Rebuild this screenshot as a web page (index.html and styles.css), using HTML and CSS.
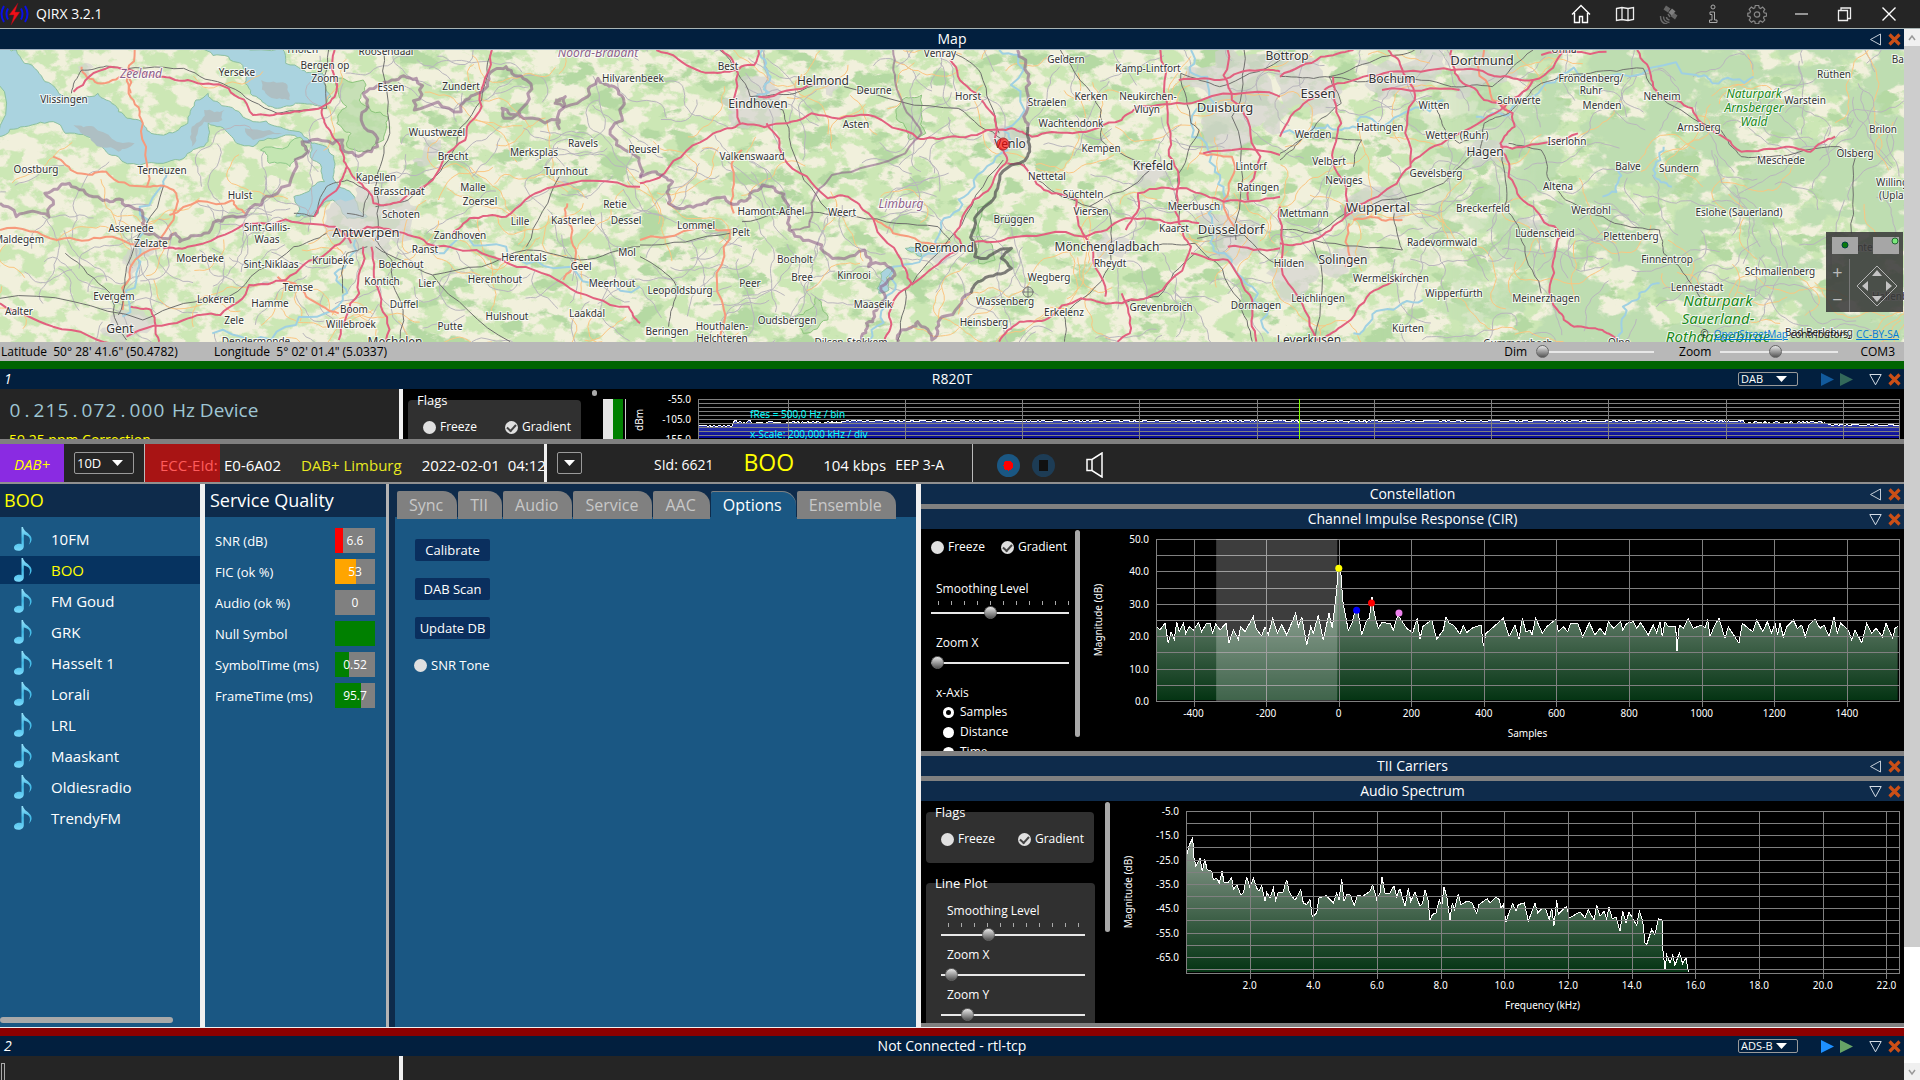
FILE: index.html
```html
<!DOCTYPE html>
<html lang="en">
<head>
<meta charset="utf-8">
<title>QIRX 3.2.1</title>
<link rel="stylesheet" href="styles.css">
</head>
<body>
<svg class="defs" width="0" height="0" aria-hidden="true">
  <defs>
    <linearGradient id="noteFill" x1="0" y1="0" x2="0" y2="1"><stop offset="0" stop-color="#9be4fb"/><stop offset=".5" stop-color="#3fb9e6"/><stop offset="1" stop-color="#7ad9fa"/></linearGradient>
    <linearGradient id="greenFill" x1="0" y1="0" x2="0" y2="1"><stop offset="0" stop-color="#b0b8b0"/><stop offset="1" stop-color="#033312"/></linearGradient>
    <linearGradient id="blueFill" x1="0" y1="0" x2="0" y2="1"><stop offset="0" stop-color="#8f9cd8"/><stop offset=".5" stop-color="#4656b6"/><stop offset="1" stop-color="#000092"/></linearGradient>
    <symbol id="note" viewBox="0 0 18 24"><path d="M7.500 0h1.500c.6 4 5 5.500 7.400 8.800 2.400 3.600.8 6.600-1.600 9 1.500-3 1.800-6-.4-8.200-1.400-1.400-3.200-2-4.600-2.200v11.800c0 2.800-2.400 4.400-5 4.600C1.800 24 0 22.600 0 20.800c0-2.400 2.600-4 5.200-4 .9 0 1.600.1 2.300.4z" fill="url(#noteFill)"/></symbol>
    <symbol id="left" viewBox="0 0 13 13"><path d="M11.500 1v11L1.500 6.500z" fill="none" stroke="#c3ccd6"/></symbol>
    <symbol id="down" viewBox="0 0 13 13"><path d="M.8 1.500h11.400L6.500 11.800z" fill="none" stroke="#d5dde6"/></symbol>
    <symbol id="close" viewBox="0 0 13 13"><path d="M1.500 1.500l10 10M11.500 1.500l-10 10" stroke="#cb4f17" stroke-width="3.200"/></symbol>
    <symbol id="play" viewBox="0 0 13 13"><path d="M0 0l13 6.500L0 13z" fill="currentColor"/></symbol>
  </defs>
</svg>

<div class="window">
  <header class="titlebar">
    <svg class="logo" width="29" height="22" viewBox="0 0 29 22"><g fill="none" stroke="#0a10e8" stroke-width="2"><path d="M4 3q-5 8 0 16M8 5.500q-3 5.500 0 11M25 3q5 8 0 16M21 5.500q3 5.500 0 11"/></g><path d="M18 0L9 12h5l-3 10 9-13h-5z" fill="#f01018" stroke="#801020" stroke-width=".5"/></svg>
    <h1>QIRX 3.2.1</h1>
    <nav class="wintools">
      <button aria-label="Home"><svg width="20" height="20" viewBox="0 0 20 20"><path d="M1 10.500L10 1.500l9 9M3.500 9v9.500h5v-6h3v6h5V9" stroke="#fff" stroke-width="1.400"/></svg></button>
      <button aria-label="Map"><svg width="20" height="20" viewBox="0 0 20 20"><path d="M1.500 4.500l5.500-1 6 1 5.500-1v12l-5.500 1-6-1-5.500 1zM7 3.500v12M13 4.500v12" stroke="#eee" stroke-width="1.300"/></svg></button>
      <button aria-label="Satellite"><svg class="solid" width="20" height="20" viewBox="0 0 20 20"><path d="M7 1.500l4.500 3-2.500 4L4.500 5.500zM14.500 8.500l4 3-2.500 4-4.500-3.500z" fill="#666"/><path d="M9.500 8.500l3.500-4 3.500 3-4 4z" fill="#808080"/><path d="M9 10l2 3M7.500 13q0 2.500 3 3M4.500 12.500q0 5.500 6 6M1.500 12q0 8 7 8" fill="none" stroke="#6a6a6a" stroke-width="1.400"/></svg></button>
      <button aria-label="Info"><svg width="20" height="20" viewBox="0 0 20 20"><circle cx="10" cy="3" r="2" stroke="#aaa"/><path d="M7 8h4.500v8H14v2.500H6.500V16H9v-5.500H7z" stroke="#aaa"/></svg></button>
      <button aria-label="Settings"><svg width="20" height="20" viewBox="0 0 20 20"><path d="M8.300 1.500h3.400l.5 2.400 1.400.6 2-1.400 2.200 2.300-1.300 2 .6 1.400 2.400.5v2.800l-2.400.5-.6 1.400 1.300 2-2.200 2.300-2-1.400-1.400.6-.5 2.400H8.300l-.5-2.400-1.400-.6-2 1.400-2.200-2.300 1.300-2-.6-1.400L.8 12V9.300l2.100-.5.600-1.400-1.300-2 2.200-2.300 2 1.400 1.400-.6z" stroke="#888" stroke-width="1.200"/><circle cx="10" cy="10.500" r="2.700" stroke="#888" stroke-width="1.200"/></svg></button>
      <button aria-label="Minimize"><svg width="20" height="20" viewBox="0 0 20 20"><path d="M4 10h13" stroke="#bbb" stroke-width="1.500"/></svg></button>
      <button aria-label="Restore"><svg width="20" height="20" viewBox="0 0 20 20"><path d="M3.500 6.500h9v10h-9zM6 6V4h9.500v10.500H13" stroke="#eee" stroke-width="1.300"/></svg></button>
      <button aria-label="Close"><svg width="20" height="20" viewBox="0 0 20 20"><path d="M3.500 3.500l13 13M16.500 3.500l-13 13" stroke="#fff" stroke-width="1.400"/></svg></button>
    </nav>
  </header>

  <div class="viewport">
  <main class="content">
    <section class="mapview">
      <div class="bar bar-deep bar-lined"><h2>Map</h2><div class="tools"><button aria-label="Expand"><svg><use href="#left"/></svg></button><button aria-label="Close"><svg><use href="#close"/></svg></button></div></div>
      <div class="map">
        <svg id="map" viewBox="0 0 1904 292" preserveAspectRatio="xMidYMid slice">
          <defs>
            <filter id="woods" x="0" y="0" width="1" height="1" color-interpolation-filters="sRGB"><feTurbulence type="fractalNoise" baseFrequency=".045 .06" numOctaves="5" seed="7"/><feColorMatrix values="0 0 0 0 .8  0 0 0 0 .905  0 0 0 0 .71  9 0 0 0 -4.200"/></filter>
            <filter id="groves" x="0" y="0" width="1" height="1" color-interpolation-filters="sRGB"><feTurbulence type="fractalNoise" baseFrequency=".03 .05" numOctaves="5" seed="21"/><feColorMatrix values="0 0 0 0 .71  0 0 0 0 .85  0 0 0 0 .64  12 0 0 0 -7"/></filter>
            <filter id="forest" x="0" y="0" width="1" height="1" color-interpolation-filters="sRGB"><feTurbulence type="fractalNoise" baseFrequency=".02 .03" numOctaves="5" seed="3"/><feColorMatrix values="0 0 0 0 .745  0 0 0 0 .865  0 0 0 0 .695  14 0 0 0 -6"/></filter>
            <linearGradient id="fadeIn"><stop offset="0" stop-color="#fff" stop-opacity="0"/><stop offset=".3" stop-color="#fff"/></linearGradient>
            <mask id="east"><rect x="1380" y="0" width="524" height="292" fill="url(#fadeIn)"/></mask>
          </defs>
          <rect width="1904" height="292" fill="#f1f0dc"/>
          <rect width="1904" height="292" filter="url(#woods)"/>
          <rect x="400" width="1504" height="292" filter="url(#groves)"/>
          <g mask="url(#east)"><rect x="1380" width="524" height="292" filter="url(#forest)"/></g>
        </svg>
        <div class="navpad">
          <button class="view" aria-label="Centre view"><svg width="26" height="17"><ellipse cx="13" cy="8" rx="3" ry="3" fill="#0a7a0a" stroke="#044" stroke-width="1"/></svg></button>
          <button class="view" aria-label="Corner view"><svg width="26" height="17"><circle cx="22" cy="4" r="3" fill="#7be87b" stroke="#263"/></svg></button>
          <div class="zoomkeys"><button aria-label="Zoom in">+</button><button aria-label="Zoom out">−</button></div>
          <svg class="pan" width="44" height="44" viewBox="0 0 44 44"><path d="M22 2l20 20-20 20L2 22z" fill="none" stroke="#b5b5b5"/><path d="M22 6l5 6H17zM22 38l5-6H17zM7 22l6-5v10zM37 22l-6-5v10z" fill="#c4c4c4"/></svg>
        </div>
        <p class="credit">© &nbsp;<a href="#osm">OpenStreetMap</a> contributors, &nbsp;<a href="#license">CC-BY-SA</a></p>
      </div>
      <div class="statusbar">
        <span class="lat">Latitude&nbsp; 50° 28' 41.6" (50.4782)</span><span>Longitude&nbsp; 5° 02' 01.4" (5.0337)</span>
        <div class="mapsliders">
          <label for="dim">Dim</label><input id="dim" type="range" min="0" max="100" value="0">
          <label for="mzoom">Zoom</label><input id="mzoom" type="range" min="0" max="100" value="46">
          <span>COM3</span>
        </div>
      </div>
    </section>

    <section class="radio">
      <div class="bar bar-deep bar-green"><i>1</i><h2>R820T</h2><div class="tools">
        <label class="pick"><select aria-label="Mode 1"><option>DAB</option></select></label>
        <button class="blue dimmed" aria-label="Start"><svg><use href="#play"/></svg></button><button class="green dimmed" aria-label="Next"><svg><use href="#play"/></svg></button>
        <button class="gap" aria-label="Collapse"><svg><use href="#down"/></svg></button><button aria-label="Close"><svg><use href="#close"/></svg></button></div></div>
      <div class="device">
        <div class="tuner">
          <p class="freq"><span class="digits"><b>0</b><b>.</b><b>2</b><b>1</b><b>5</b><b>.</b><b>0</b><b>7</b><b>2</b><b>.</b><b>0</b><b>0</b><b>0</b></span>Hz Device</p>
          <p class="ppm">59.25 ppm Correction</p>
        </div>
        <div class="rf">
          <fieldset class="group"><legend>Flags</legend><div class="checks"><label><input type="checkbox">Freeze</label><label><input type="checkbox" checked>Gradient</label></div></fieldset>
          <span class="nub"></span>
          <div class="meter"><span></span><span></span></div>
          <svg class="chart" id="rfchart" role="img" aria-label="RF spectrum"></svg>
        </div>
      </div>
    </section>

    <section class="ensemblebar">
      <span class="mode">DAB+</span>
      <label class="pick channel"><select aria-label="Channel"><option>10D</option></select></label>
      <div class="ident"><span class="ecc">ECC-EId:</span><span>E0-6A02</span><span class="name">DAB+ Limburg</span><span>2022-02-01&nbsp; 04:12</span></div>
      <button class="drop" aria-label="More"></button>
      <div class="service"><span>SId: 6621</span><strong>BOO</strong><span>104 kbps</span><span>EEP 3-A</span></div>
      <div class="transport">
        <button class="rec" aria-label="Record"></button><button class="stop" aria-label="Stop"></button>
        <button aria-label="Sound"><svg width="18" height="26" viewBox="0 0 18 26"><path d="M1 7.500h5l10-6.500v24L6 18.500H1zM6 7.500v11" fill="none" stroke="#fff" stroke-width="1.500"/></svg></button>
      </div>
    </section>

    <div class="dab">
      <section class="stations">
        <h3>BOO</h3>
        <ul>
          <li><svg><use href="#note"/></svg>10FM</li><li class="on"><svg><use href="#note"/></svg>BOO</li><li><svg><use href="#note"/></svg>FM Goud</li><li><svg><use href="#note"/></svg>GRK</li><li><svg><use href="#note"/></svg>Hasselt 1</li><li><svg><use href="#note"/></svg>Lorali</li><li><svg><use href="#note"/></svg>LRL</li><li><svg><use href="#note"/></svg>Maaskant</li><li><svg><use href="#note"/></svg>Oldiesradio</li><li><svg><use href="#note"/></svg>TrendyFM</li>
        </ul>
        <div class="hthumb"></div>
      </section>
      <section class="quality">
        <h3>Service Quality</h3>
        <table>
          <tr><th>SNR (dB)</th><td><div class="gauge"><span class="red" style="width:20%"></span><em>6.6</em></div></td></tr>
          <tr><th>FIC (ok %)</th><td><div class="gauge"><span class="amber" style="width:53%"></span><em>53</em></div></td></tr>
          <tr><th>Audio (ok %)</th><td><div class="gauge"><em>0</em></div></td></tr>
          <tr><th>Null Symbol</th><td><div class="gauge"><span class="ok" style="width:100%"></span></div></td></tr>
          <tr><th>SymbolTime (ms)</th><td><div class="gauge"><span class="ok" style="width:35%"></span><em>0.52</em></div></td></tr>
          <tr><th>FrameTime (ms)</th><td><div class="gauge"><span class="ok" style="width:65%"></span><em>95.7</em></div></td></tr>
        </table>
      </section>
      <section class="options">
        <nav class="tabs"><button>Sync</button><button>TII</button><button>Audio</button><button>Service</button><button>AAC</button><button class="on">Options</button><button>Ensemble</button></nav>
        <div class="optbody"><button>Calibrate</button><button>DAB Scan</button><button>Update DB</button><label><input type="checkbox">SNR Tone</label></div>
      </section>
      <section class="plots">
        <div class="bar"><h2>Constellation</h2><div class="tools"><button aria-label="Expand"><svg><use href="#left"/></svg></button><button aria-label="Close"><svg><use href="#close"/></svg></button></div></div>
        <div class="bar"><h2>Channel Impulse Response (CIR)</h2><div class="tools"><button aria-label="Collapse"><svg><use href="#down"/></svg></button><button aria-label="Close"><svg><use href="#close"/></svg></button></div></div>
        <div class="pane">
          <div class="controls cir">
            <div class="checks"><label><input type="checkbox">Freeze</label><label><input type="checkbox" checked>Gradient</label></div>
            <label class="cap first" for="c1">Smoothing Level</label><div class="ticks"></div><input id="c1" type="range" value="42">
            <label class="cap" for="c2">Zoom X</label><input id="c2" type="range" value="0" class="low">
            <div class="cap axis">x-Axis</div>
            <label class="opt"><input type="radio" name="axis" checked>Samples</label><label class="opt"><input type="radio" name="axis">Distance</label><label class="opt"><input type="radio" name="axis">Time</label>
          </div>
          <div class="vthumb long"></div>
          <svg class="chart" id="circhart" role="img" aria-label="Channel impulse response"></svg>
        </div>
        <div class="bar"><h2>TII Carriers</h2><div class="tools"><button aria-label="Expand"><svg><use href="#left"/></svg></button><button aria-label="Close"><svg><use href="#close"/></svg></button></div></div>
        <div class="bar"><h2>Audio Spectrum</h2><div class="tools"><button aria-label="Collapse"><svg><use href="#down"/></svg></button><button aria-label="Close"><svg><use href="#close"/></svg></button></div></div>
        <div class="pane last">
          <div class="controls aud">
            <fieldset class="group"><legend>Flags</legend><div class="checks"><label><input type="checkbox">Freeze</label><label><input type="checkbox" checked>Gradient</label></div></fieldset>
            <fieldset class="group line"><legend>Line Plot</legend>
              <label class="cap first" for="a1">Smoothing Level</label><div class="ticks"></div><input id="a1" type="range" value="31">
              <label class="cap" for="a2">Zoom X</label><input id="a2" type="range" value="3" class="low">
              <label class="cap" for="a3">Zoom Y</label><input id="a3" type="range" value="15" class="low">
            </fieldset>
          </div>
          <div class="vthumb short"></div>
          <svg class="chart" id="audchart" role="img" aria-label="Audio spectrum"></svg>
        </div>
      </section>
    </div>

    <section class="radio second">
      <div class="bar bar-deep bar-red"><i>2</i><h2>Not Connected - rtl-tcp</h2><div class="tools">
        <label class="pick"><select aria-label="Mode 2"><option>ADS-B</option></select></label>
        <button class="blue" aria-label="Start"><svg><use href="#play"/></svg></button><button class="green" aria-label="Next"><svg><use href="#play"/></svg></button>
        <button class="gap" aria-label="Collapse"><svg><use href="#down"/></svg></button><button aria-label="Close"><svg><use href="#close"/></svg></button></div></div>
      <div class="device"><div class="tuner"><span class="caret"></span></div><div></div></div>
    </section>
  </main>
  <aside class="scrollbar"><svg width="16" height="17" viewBox="0 0 16 17"><path d="M5 11l3-4 3 4" fill="none" stroke="#999" stroke-width="1.500"/></svg><div class="thumb"></div><div class="track"></div><svg width="16" height="17" viewBox="0 0 16 17"><path d="M5 7l3 4 3-4" fill="none" stroke="#999" stroke-width="1.500"/></svg></aside>
  </div>
</div>
<script src="script.js"></script>
</body>
</html>
```
FILE: styles.css
```css
* { box-sizing: border-box; margin: 0; padding: 0; }
body { font-family: "Open Sans", "Noto Sans", sans-serif; font-size: 12px; line-height: 18px; color: #fff; background: #252525; }
button, select, input { font: inherit; color: inherit; border: 0; background: none; }
svg { display: block; }
ul { list-style: none; }
.defs { position: absolute; }

.window { height: 100vh; display: flex; flex-direction: column; overflow: hidden; }
.titlebar { height: 29px; flex: none; display: flex; align-items: center; background: #252525; border-bottom: 1px solid #a9b5b5; }
.titlebar h1 { font-size: 14px; font-weight: 400; margin-left: 7px; flex: 1; }
.wintools { display: flex; padding-right: 9px; }
.wintools button { width: 44px; display: flex; justify-content: center; }
.wintools svg:not(.solid) path, .wintools circle { fill: none; }

.viewport { flex: 1; display: flex; min-height: 0; }
.content { flex: 1; min-width: 0; display: flex; flex-direction: column; }
.scrollbar { width: 16px; display: flex; flex-direction: column; background: #f0f0f0; }
.scrollbar .thumb { flex: 901; background: #cdcdcd; }
.scrollbar .track { flex: 116; background: #fff; }

.bar { height: 20px; flex: none; display: grid; grid-template-columns: 1fr auto 1fr; align-items: center; background: #0e2b4b; }
.bar h2 { grid-column: 2; font-size: 14px; line-height: 20px; font-weight: 400; }
.bar i { grid-column: 1; padding-left: 4px; font-size: 14px; }
.bar-deep { background: #021f3e; }
.bar-lined { height: 21px; border-bottom: 1px solid #9fb0c0; }
.bar-green { height: 28px; border-top: 8px solid #006400; }
.bar-red { height: 28px; border-top: 8px solid #8b0000; }
.tools { grid-column: 3; justify-self: end; display: flex; align-items: center; gap: 6px; padding-right: 3px; }
.tools svg { width: 13px; height: 13px; }
.tools .gap { margin-left: 10px; }
.blue { color: #1e90ff; }
.green { color: #66a366; }
.blue.dimmed { color: #125a9c; }
.green.dimmed { color: #33695a; }

.pick { display: grid; align-items: center; width: 60px; height: 14px; border: 1px solid #9a9a9a; border-radius: 2px; }
.tools .pick { margin-right: 17px; }
.pick select { grid-area: 1 / 1; appearance: none; width: 100%; font-size: 11px; line-height: 12px; padding-left: 2px; outline: 0; }
.pick::after, .drop::after { content: ""; width: 11px; height: 6px; background: #fff; clip-path: polygon(0 0, 100% 0, 50% 100%); }
.pick::after { grid-area: 1 / 1; justify-self: end; margin-right: 10px; pointer-events: none; }

input[type=range] { appearance: none; display: block; height: 13px; background: linear-gradient(#e8e8e8, #e8e8e8) center / 100% 2px no-repeat; }
input[type=range]::-webkit-slider-thumb { appearance: none; width: 13px; height: 13px; border-radius: 50%; background: linear-gradient(#e6e6e6, #555); border: 1px solid #666; }
input[type=checkbox], input[type=radio] { appearance: none; flex: none; width: 13px; height: 13px; border-radius: 50%; background: #e0e0e0; margin-right: 4px; }
input[type=checkbox]:checked { display: grid; place-items: center; }
input[type=checkbox]:checked::after { content: ""; width: 7px; height: 4px; border: solid #444; border-width: 0 0 2px 2px; transform: rotate(-48deg); }
input[type=radio] { width: 11px; height: 11px; background: #fff; margin-right: 6px; }
input[type=radio]:checked { background: #000; border: 3px solid #fff; }
.checks { display: flex; justify-content: space-between; }
.checks label, .opt { display: flex; align-items: center; }

/* map */
.mapview { flex: none; }
.map { position: relative; height: 292px; overflow: hidden; }
#map { width: 100%; height: 100%; }
#map text { font-family: "Noto Sans", sans-serif; font-size: 10px; fill: #333; text-anchor: middle; stroke: #fffc; stroke-width: 2px; paint-order: stroke; }
#map .city { font-size: 13px; }
#map .mid { font-size: 12px; }
#map .prov { font-style: italic; font-size: 12px; fill: #8d618b; }
#map .park { font-style: italic; font-size: 12px; fill: #1a8a1a; }
#map .bigpark { font-style: italic; font-size: 15px; fill: #1a8a1a; }
#map path { fill: none; vector-effect: non-scaling-stroke; stroke-linejoin: round; }
#map .water { fill: #aad3df; stroke: #8cc0a0; }
#map .shoal { fill: #aebfc3; }
#map .marsh { fill: #c4e6b2; stroke: #8fc98a; }
#map .urban { fill: #d3d1cf; fill-opacity: .65; }
#map .grove { fill: #b5d9a5; fill-opacity: .7; stroke: #8cc47c; }
#map .m { stroke: #e2607f; stroke-width: 2; }
#map .t { stroke: #f79a7c; stroke-width: 2; }
#map .y { stroke: #fbc681; stroke-width: 1; }
#map .g { stroke: #b9b6bd; stroke-width: 1; }
#map .r { stroke: #70706e; stroke-width: 1; }
#map .w { stroke: #9fd0e2; stroke-width: 2; }
#map .b { stroke: #8d618b; stroke-opacity: .6; stroke-width: 3; }
#map .bl { stroke: #8d618b; stroke-opacity: .6; stroke-width: 2; }
#map .bg { stroke: #555; stroke-opacity: .75; stroke-width: 3; }
.navpad { position: absolute; right: 1px; top: 182px; width: 77px; height: 80px; padding: 5px 4px 0 6px; display: grid; grid-template-columns: 18px 1fr; grid-template-rows: 22px 1fr; background: #383838dd; }
.navpad .view { width: 26px; height: 17px; background: #a6a6a6; }
.navpad .view:nth-child(2) { justify-self: end; }
.zoomkeys { display: flex; flex-direction: column; justify-content: space-around; border-right: 1px solid #777; }
.zoomkeys button { color: #bbb; font-size: 18px; line-height: 24px; margin-left: -6px; }
.pan { align-self: center; justify-self: end; }
.credit { position: absolute; right: 5px; bottom: 0; font-size: 10px; line-height: 16px; color: #111; }
.credit a { color: #0078d7; }
.statusbar { height: 19px; display: flex; align-items: center; background: #b8b8b8; color: #000; padding-left: 1px; }
.statusbar .lat { width: 213px; }
.mapsliders { margin-left: auto; display: flex; align-items: center; padding-right: 9px; }
.mapsliders label { margin-right: 9px; }
.mapsliders input { width: 118px; margin-right: 25px; }
.mapsliders #mzoom { margin-right: 22px; }

/* receivers */
.radio { flex: none; }
.device { display: grid; grid-template-columns: 403px 1fr; grid-template-rows: 100%; height: 50px; overflow: hidden; background: #252525; }
.tuner { border-right: 4px solid #f0f0f0; padding: 9px 0 0 9px; overflow: hidden; }
.freq { display: flex; gap: 7px; font-size: 19px; line-height: 24px; color: #9fc6d4; }
.digits { display: flex; }
.digits b { width: 12px; font-weight: 400; text-align: center; }
.ppm { color: #ff0; font-size: 14px; line-height: 20px; margin-top: 8px; }
.rf { display: flex; background: #000; min-width: 0; padding-left: 5px; overflow: hidden; }
.group { border: 0; margin-top: 2px; background: #303030; border-radius: 4px; padding: 0 10px 15px 15px; align-self: start; }
.group legend { margin-left: -6px; font-size: 13px; line-height: 18px; }
.group .checks { padding-top: 9px; }
.rf .group { width: 173px; }
.nub { width: 5px; height: 6px; margin: 1px 0 0 11px; border-radius: 3px; background: #aaa; }
.meter { display: flex; margin: 10px 0 0 6px; border-right: 1px solid #ccc; padding-right: 2px; }
.meter span { width: 10px; background: #e6e6e6; }
.meter span + span { background: #008000; }
.chart { flex: 1; min-width: 0; height: 100%; overflow: hidden; }
.chart text { font-family: "Noto Sans", sans-serif; font-size: 10px; fill: #fff; }
.chart .grid { stroke: #808080; stroke-width: 1; shape-rendering: crispEdges; fill: none; }
.chart .trace { stroke: #fff; stroke-width: 1; fill: none; shape-rendering: crispEdges; }
.chart .note { fill: #0ff; font-size: 10px; }
.second .device { height: 24px; }
.second .tuner { padding: 7px 0 0 1px; }
.caret { display: block; width: 4px; height: 20px; border: 1px solid #aaa; }
.second { border-top: 1px solid #f0f0f0; }

/* ensemble strip */
.ensemblebar { flex: none; height: 45px; border-top: 5px solid #808080; border-bottom: 2px solid #909090; display: flex; align-items: center; background: #252525; font-size: 15px; }
.mode { width: 64px; line-height: 40px; height: 38px; text-align: center; font-style: italic; color: #ff0; background: #8a2be2; }
.channel { height: 22px; margin: 0 10px; }
.channel select { font-size: 13px; }
.ident { width: 403px; height: 38px; border-left: 1px solid #bbb; border-right: 3px solid #f0f0f0; background: #303030; display: flex; white-space: pre; overflow: hidden; line-height: 43px; }
.ident .ecc { width: 75px; padding-left: 15px; margin-right: 4px; background: #a81414; color: #ff5c5c; overflow: hidden; flex: none; }
.ident .name { color: #e8e820; margin: 0 20px; }
.drop { width: 25px; height: 22px; margin-left: 10px; border: 1px solid #9a9a9a; border-radius: 2px; display: grid; place-items: center; }
.service { display: flex; align-items: center; padding: 4px 0 0 72px; width: 391px; height: 38px; border-right: 1px solid #bbb; white-space: nowrap; }
.service strong { font-weight: 400; font-size: 23px; color: #ff0; margin: 0 29px 6px 30px; }
.service span:last-child { margin-left: 9px; }
.service span { font-size: 14px; }
.service span:nth-child(3) { font-size: 15px; }
.transport { display: flex; align-items: center; padding: 4px 0 0 24px; }
.transport button { margin-right: 12px; }
.rec, .stop { width: 23px; height: 23px; border-radius: 50%; background: radial-gradient(circle, #f00 0 5px, #1a5783 5px); }
.stop { background: linear-gradient(#111, #111) center / 9px 11px no-repeat #1d3c55; }
.transport .stop { margin-right: 31px; }

/* DAB panels */
.dab { flex: 1; min-height: 0; display: grid; grid-template-columns: 205px 184px 532px 1fr; background: #1a5783; }
.dab section { min-width: 0; min-height: 0; overflow: hidden; }
.dab h3 { height: 33px; line-height: 33px; font-size: 18px; font-weight: 400; background: #0e2b4b; padding-left: 5px; }
.stations { border-right: 5px solid #f0f0f0; display: flex; flex-direction: column; }
.stations h3 { color: #ff0; padding-left: 4px; }
.stations ul { padding-top: 8px; flex: 1; }
.stations li { display: flex; align-items: center; height: 28px; margin-bottom: 3px; padding-left: 14px; font-size: 15px; }
.stations li svg { width: 18px; height: 24px; margin-right: 19px; }
.stations .on { background: #063360; color: #ff0; }
.hthumb { width: 173px; height: 6px; margin-bottom: 4px; border-radius: 3px; background: #a9a9a9; }
.quality { border-right: 3px solid #b4b4b4; }
.quality table { border-spacing: 0; margin-top: 8px; width: 170px; }
.quality th { text-align: left; font-weight: 400; font-size: 13px; padding-left: 10px; white-space: nowrap; }
.quality td { width: 40px; height: 31px; }
.gauge { width: 40px; height: 25px; display: grid; align-items: center; background: #808080; }
.gauge span { grid-area: 1 / 1; height: 100%; }
.gauge em { grid-area: 1 / 1; font-style: normal; text-align: center; }
.red { background: #f00; }
.amber { background: #ffa500; }
.ok { background: #008000; }
.options { border-left: 6px solid #0e2b4b; border-right: 5px solid #f0f0f0; }
.tabs { height: 35px; display: flex; align-items: flex-end; padding-left: 2px; background: linear-gradient(#0e2b4b 33px, #1a5783 33px); }
.tabs button { flex: none; height: 28px; margin-right: 1px; padding: 0 14px 0 12px; font-size: 16px; line-height: 28px; color: #c8c8c8; background: #808080; border-radius: 2px 14px 0 0; }
.tabs .on { background: #1a5783; color: #fff; box-shadow: inset 0 1px #808080; }
.optbody { padding: 20px; display: flex; flex-direction: column; align-items: flex-start; gap: 17px; }
.optbody button { width: 75px; height: 22px; background: #0a2f5e; border-radius: 2px; font-size: 13px; }
.optbody label { display: flex; align-items: center; font-size: 13px; margin-left: -1px; }

.plots { display: flex; flex-direction: column; background: #808080; }
.plots .bar { margin-bottom: 5px; }
.plots .bar:has(+ .pane) { margin-bottom: 0; }
.pane { flex: 1; min-height: 0; margin-bottom: 5px; display: flex; background: #000; overflow: hidden; }
.pane.last { margin-bottom: 4px; }
.controls { flex: none; font-size: 12px; overflow: hidden; display: flex; flex-direction: column; }
.cir { width: 154px; padding: 9px 6px 0 10px; }
.cir .checks { padding-right: 2px; }
.cap { display: block; margin: 15px 0 0 5px; line-height: 18px; flex: none; }
.cap.first { margin-top: 24px; }
.axis { margin-top: 15px; }
.opt { height: 20px; flex: none; padding-left: 12px; }
.ticks { height: 4px; flex: none; margin: 3px 0 1px 7px; width: 131px; background: repeating-linear-gradient(90deg, #aaa 0 1px, #0000 1px 13px); }
.cir input[type=range] { width: 138px; flex: none; }
.low { margin-top: 4px; }
.aud { width: 184px; padding: 0 11px 0 5px; }
.aud .group { width: 168px; }
.aud .line { margin-top: 11px; padding-bottom: 30px; }
.aud .line .cap { margin: 5px 0 0 6px; }
.aud .line .first { margin-top: 10px; }
.aud .line input { width: 144px; }
.aud .line .low { margin-top: 4px; }
.vthumb { width: 5px; border-radius: 3px; background: #a9a9a9; margin-top: 1px; flex: none; }
.long { height: 207px; }
.short { height: 130px; }
```
FILE: script.js
```js
const NS = 'http://www.w3.org/2000/svg';

function add(parent, tag, attrs, text) {
  const node = document.createElementNS(NS, tag);
  for (const key in attrs) node.setAttribute(key, attrs[key]);
  if (text !== undefined) node.textContent = text;
  parent.appendChild(node);
  return node;
}

let seed = 11;
function rnd() { seed = (seed * 16807) % 2147483647; return seed / 2147483647; }

/* Map: three tiles side by side. Tile units are 1568 wide and 3 per pixel down. */
const UX = 1568 / 640, UY = 3, TOP = 50;

const areas = [
  [0, 'water', 'M-5,140L40,150L60,190L110,245L160,290L220,290L240,280L260,300L290,335L340,360L370,400L430,395L460,370L480,300L510,280L560,320L620,365L680,380L740,400L765,430L740,420L700,405L620,440L580,430L540,380L510,370L500,440L440,480L400,490L290,470L240,430L160,400L140,370L60,380L-5,410Z'],
  [0, 'water', 'M490,145L560,170L590,190L600,250L640,300L680,325L740,310L790,320L810,290L790,220L740,210L700,190L690,145Z'],
  [0, 'shoal', 'M180,375L230,380L330,430L290,455L220,410Z'], [0, 'shoal', 'M470,380L500,330L550,330L545,360L500,365L470,440Z'], [0, 'shoal', 'M600,385L720,395L620,420Z'], [0, 'shoal', 'M640,240L700,250L710,300L660,290Z'],
  [0, 'marsh', 'M638,450L735,412L752,458L710,500L660,490Z'],
  [0, 'water', 'M760,430L800,440L820,500L830,560L870,600L900,650L850,655L815,600L780,640L725,650L720,590L765,560L795,545L760,470Z'],
  [0, 'grove', 'M820,230L890,240L880,300L950,350L940,420L910,450L850,440L860,400L825,370L850,320Z'],
  [0, 'urban', 'M800,660L860,600L930,560L1000,600L1010,700L950,770L880,760L830,720Z'], [0, 'urban', 'M270,950L330,920L360,1000L300,1030L250,1000Z'], [0, 'urban', 'M300,790L350,740L380,740L330,840Z'], [0, 'urban', 'M190,200L230,200L215,240Z'], [0, 'urban', 'M1340,520L1400,520L1380,560Z'], [0, 'urban', 'M1040,410L1080,420L1030,500L1010,480Z'],
  [1, 'urban', 'M200,300L250,230L330,260L370,320L330,370L220,380Z'], [1, 'urban', 'M400,230L500,240L470,290Z'], [1, 'urban', 'M850,400L930,380L950,450L900,480Z'], [1, 'urban', 'M680,740L770,720L750,790Z'], [1, 'urban', 'M1200,470L1280,470L1260,560L1210,550Z'], [1, 'urban', 'M1340,200L1568,150L1568,400L1480,380L1440,460L1380,380L1400,300Z'], [1, 'urban', 'M1120,680L1220,690L1200,760L1120,770Z'], [1, 'urban', 'M1360,640L1500,660L1520,760L1400,760Z'],
  [1, 'grove', 'M640,300L690,285L700,400L660,420L630,360Z'], [1, 'grove', 'M380,950L430,890L460,960L400,1000Z'], [1, 'grove', 'M860,600L830,700L870,780L830,790L815,660Z'],
  [1, 'water', 'M590,820L620,800L610,870L585,880Z'], [1, 'water', 'M650,745L700,730L690,770Z'],
  [2, 'urban', 'M0,160L120,150L150,260L80,350L0,330Z'], [2, 'urban', 'M180,180L400,150L380,240L240,300Z'], [2, 'urban', 'M400,150L560,150L580,230L500,250L430,290Z'], [2, 'urban', 'M160,600L300,580L280,660L180,660Z'], [2, 'urban', 'M450,440L560,430L570,500L470,490Z'], [2, 'urban', 'M90,770L220,760L200,800L100,810Z'], [2, 'urban', 'M0,760L60,780L50,900L0,880Z'], [2, 'urban', 'M590,650L660,650L640,710Z']
];

const lines = [
  [0, 'w', 'M400,500L395,560L350,700L340,800L300,950'], [0, 'w', 'M870,720L820,820L840,900L700,980L520,1000'], [0, 'w', 'M1060,760L1240,740L1400,800L1568,860'],
  [1, 'w', 'M880,150L940,210L890,390L900,450L820,560L760,650L740,750L620,800L600,900L560,1025'], [1, 'w', 'M1350,150L1390,230L1350,370L1410,500L1440,600L1400,700L1450,780L1500,860L1540,1000'], [1, 'w', 'M300,150L320,230L280,310'],
  [2, 'w', 'M0,400L80,380L150,390L210,350L320,330L400,300'], [2, 'w', 'M480,350L560,345L650,250L800,230L1020,225L1060,250L1160,230'], [2, 'w', 'M940,440L920,520L960,560'], [2, 'w', 'M830,1020L840,920L880,880L930,850'], [2, 'w', 'M180,1000L250,930L350,900'], [2, 'w', 'M790,590L830,540L835,490'],
  [0, 't', 'M330,150L315,280L350,370L360,560L425,570L425,660L320,800L300,930'], [0, 't', 'M0,690L140,720L260,710L380,740'], [0, 't', 'M130,470L190,520L260,515L360,560'], [0, 't', 'M415,645L570,600L600,640'], [0, 't', 'M1390,610L1400,680L1410,770L1380,840'], [0, 't', 'M680,830L750,890L830,940'],
  [0, 't', 'M200,200L240,250L310,230L320,280'], [1, 't', 'M0,720L220,690L200,900L200,1025'], [1, 't', 'M570,655L620,700L760,725'], [1, 't', 'M230,640L225,500L250,450'], [1, 't', 'M1370,460L1450,470L1430,600L1460,700'], [2, 't', 'M500,150L520,300L560,340'], [2, 't', 'M170,670L180,780L160,800'], [2, 't', 'M180,660L220,650L300,660'],
  [0, 'r', 'M175,280L200,210L260,198L450,205L560,260L680,340L800,325L805,150'], [0, 'r', 'M940,150L955,400L920,560L920,720L960,780L980,900L980,1025'], [0, 'r', 'M0,895L350,960L560,890L720,740L800,700'], [0, 'r', 'M920,740L1060,825L1250,1025'], [0, 'r', 'M290,945L310,800L400,560'], [0, 'r', 'M920,620L1000,600L1100,480L1180,300L1205,150'], [0, 'r', 'M1060,825L1290,750L1420,780L1568,740'], [0, 'r', 'M1290,740L1370,530'], [0, 'r', 'M840,880L850,760L900,740'], [0, 'r', 'M720,640L770,650L800,560L850,540L905,575L890,650L850,640'], [0, 'r', 'M160,760L270,880L310,1020'],
  [1, 'r', 'M195,150L270,290L350,330L370,440L460,630'], [1, 'r', 'M270,290L380,280L430,255'], [1, 'r', 'M250,665L410,640L530,650L730,680L760,720'], [1, 'r', 'M500,260L780,325L890,420'], [1, 'r', 'M770,160L835,220L880,400'], [1, 'r', 'M890,480L770,700L650,870L630,1025'], [1, 'r', 'M1030,150L1130,330L1130,420L1250,510L1100,620'], [1, 'r', 'M940,490L1020,580L1150,640L1150,800L1040,950L1040,1025'], [1, 'r', 'M0,735L220,700'], [1, 'r', 'M1480,150L1450,350L1460,720'], [1, 'r', 'M1270,735L1360,730L1470,900L1500,1025'], [1, 'r', 'M1320,670L1320,520L1370,390L1350,370L1325,220L1420,260L1568,180'], [1, 'r', 'M1360,760L1270,890L1180,910'], [1, 'r', 'M0,770L90,860L70,980'], [1, 'r', 'M1365,715L1480,705L1568,800'],
  [2, 'r', 'M0,460L60,410L150,310L120,230L250,170L330,150'], [2, 'r', 'M0,230L110,230L270,240L420,260L520,260L620,150'], [2, 'r', 'M0,690L80,700L250,600L400,550L490,450L500,370L560,340L640,250L760,220L890,205L950,310L1080,390L1130,470L1200,470L1370,440L1410,470L1400,700'], [2, 'r', 'M280,640L300,750L80,720L85,1025'], [2, 'r', 'M560,430L640,450L655,530L700,600L820,670L930,690L940,760L1000,840L1050,920'], [2, 'r', 'M380,310L400,380L440,430L490,400'], [2, 'r', 'M545,460L550,620L600,740L640,880'], [2, 'r', 'M0,480L60,410L200,420L180,500'],
  [0, 'm', 'M180,275L270,200L340,215L400,230L460,240L560,265L620,345L700,340L790,320L820,290L820,150'], [0, 'm', 'M790,325L800,380L830,430L850,500L900,570L915,610L980,605L1060,540L1140,420L1180,320L1205,150'], [0, 'm', 'M400,745L460,740L600,670L700,658L820,680L860,730'], [0, 'm', 'M0,910L130,980L300,1040'], [0, 'm', 'M310,1010L450,960L540,945L610,855L700,840L800,760L860,700L900,680L1000,705L1100,740L1230,780L1380,850L1540,920L1568,970'], [0, 'm', 'M1110,700L1150,655L1240,650L1340,565L1568,560'], [0, 'm', 'M890,740L880,880L830,1020'], [0, 'm', 'M910,740L930,880L945,1025'], [0, 'm', 'M320,920L370,930L390,1025'], [0, 'm', 'M770,650L830,560L850,500'],
  [1, 'm', 'M40,150L140,210L220,215L280,195L290,150'], [1, 'm', 'M200,150L240,220L245,370'], [1, 'm', 'M0,550L60,520L180,400L250,370L360,370L420,340L560,345L680,415L740,415L850,390L910,385L960,410L1060,400L1180,360L1220,320L1350,310L1568,290'], [1, 'm', 'M310,370L350,470L460,595L510,590L560,640L640,780L665,850L610,940L600,1025'], [1, 'm', 'M290,290L430,250'], [1, 'm', 'M760,180L810,270L870,350L870,430L900,480L860,560L790,650L770,700L790,740L750,770L665,855'], [1, 'm', 'M900,490L930,490L990,570L1070,600L1085,700L1140,860L1140,890'], [1, 'm', 'M820,725L900,715L1090,710L1190,655L1300,670L1370,670'], [1, 'm', 'M1190,690L1220,580L1340,565L1430,605L1568,590'], [1, 'm', 'M1275,150L1300,400L1320,530L1320,670L1350,740L1280,870L1180,910L1080,895L1000,955L930,965L880,1025'], [1, 'm', 'M1440,150L1450,300L1520,470L1490,600'], [1, 'm', 'M1380,460L1568,465'], [1, 'm', 'M1320,240L1420,240L1520,210L1568,215'], [1, 'm', 'M1350,760L1440,780L1500,900L1510,1025'], [1, 'm', 'M1180,880L1200,1000L1170,1025'], [1, 'm', 'M1440,740L1568,745'],
  [2, 'm', 'M0,410L70,300L140,250L270,215L420,210L540,230L620,240'], [2, 'm', 'M420,150L440,240L500,300L570,340L575,380L540,430L560,530L620,620L690,700L670,780L680,930L720,980L790,990L830,1025'], [2, 'm', 'M265,150L300,210L330,300L320,500L240,590L160,650L80,720L0,730'], [2, 'm', 'M320,490L420,410L540,330L620,240L700,150'], [2, 'm', 'M250,270L440,270'], [2, 'm', 'M540,440L600,440L730,400'], [2, 'm', 'M875,150L910,240L930,290L1010,325L1070,400L1130,455L1240,440L1300,455L1360,410'], [2, 'm', 'M130,230L150,370L130,480L160,650'], [2, 'm', 'M0,620L20,850L90,1020L150,980L220,880L300,820'], [2, 'm', 'M640,165L800,155'], [2, 'm', 'M0,230L100,170L180,150'],
  [0, 'b', 'M0,610L20,620L40,650L120,650L110,580L170,550L240,590L300,600L350,640L355,700L430,700L440,725L500,700L560,650L600,650L680,580L755,455L740,425L840,420L845,455L910,455L925,440L885,360L890,280L960,240L1020,235L1015,330L1130,335L1140,300L1170,280L1210,210L1240,200L1290,240L1275,350L1230,325L1235,355L1370,360L1370,385L1440,290L1465,235L1505,260L1525,320L1495,390L1550,460L1568,535'], [0, 'b', 'M1360,300L1385,290L1380,320L1360,310L1375,300'],
  [1, 'b', 'M0,530L40,515L80,545L70,610L130,622L170,600L240,612L270,580L300,555L330,565L360,610L365,690L445,735L450,755L550,750L560,800L600,790L625,825L590,860L600,900L575,950L555,970L545,1025'], [1, 'b', 'M635,1025L640,990L680,965L715,1020L740,950L810,880'], [1, 'bg', 'M810,880L840,840L910,805L885,775L910,745L850,775L820,770L820,655L870,590L910,495L930,490L955,440L950,380'], [1, 'b', 'M950,380L940,350L955,250L945,180L925,150'], [1, 'bl', 'M620,150L630,270L690,400L650,460L470,525L420,610L415,680L370,690']
];

const labels = {
  0: [['Bergen op', 796, 195], ['Zoom', 796, 233], ['Roosendaal', 946, 152], ['Yerseke', 580, 217], ['Essen', 959, 262], ['Zundert', 1130, 258], ['Hilvarenbeek', 1550, 233], ['Vlissingen', 156, 298], ['Wuustwezel', 1071, 395], ['Ravels', 1428, 430], ['Merksplas', 1309, 455], ['Reusel', 1578, 446], ['Brecht', 1110, 469], ['Oostburg', 87, 508], ['Terneuzen', 397, 511], ['Turnhout', 1386, 514], ['Kapellen', 922, 530], ['Malle', 1158, 560], ['Brasschaat', 978, 573], ['Hulst', 588, 586], ['Zoersel', 1176, 604], ['Retie', 1507, 612], ['Schoten', 983, 641], ['Lille', 1275, 662], ['Kasterlee', 1403, 659], ['Dessel', 1533, 660], ['Assenede', 320, 683], ['Sint-Gillis-', 654, 681], ['Waas', 655, 718], ['Antwerpen', 897, 695, 'city'], ['Zandhoven', 1128, 705], ['Maldegem', 47, 716], ['Zelzate', 371, 729], ['Ranst', 1042, 748], ['Mol', 1535, 757], ['Herentals', 1285, 771], ['Moerbeke', 490, 775], ['Kruibeke', 815, 781], ['Sint-Niklaas', 664, 792], ['Boechout', 983, 793], ['Geel', 1423, 799], ['Herenthout', 1212, 836], ['Kontich', 937, 842], ['Lier', 1047, 850], ['Meerhout', 1500, 848], ['Temse', 730, 860], ['Evergem', 279, 889], ['Lokeren', 530, 896], ['Hamme', 662, 908], ['Duffel', 991, 911], ['Boom', 867, 926], ['Aalter', 47, 932], ['Laakdal', 1437, 939], ['Hulshout', 1243, 947], ['Zele', 574, 959], ['Willebroek', 860, 973], ['Putte', 1103, 979], ['Gent', 295, 986, 'mid'], ['Dendermonde', 627, 1024], ['Mechelen', 967, 1026, 'mid'], ['Zeeland', 346, 221, 'prov'], ['Noord-Brabant', 1464, 160, 'prov'], ['Tholen', 740, 148]],
  1: [['Best', 215, 199], ['Helmond', 448, 243, 'mid'], ['Venray', 734, 160], ['Geldern', 1044, 176], ['Kamp-Lintfort', 1244, 203], ['Deurne', 573, 269], ['Horst', 803, 289], ['Kerken', 1104, 287], ['Neukirchen-', 1244, 289], ['Straelen', 996, 305], ['Eindhoven', 290, 312, 'mid'], ['Duisburg', 1433, 321, 'city'], ['Vluyn', 1243, 327], ['Asten', 529, 373], ['Wachtendonk', 1055, 370], ['Venlo', 906, 433, 'mid'], ['Kempen', 1130, 445], ['Valkenswaard', 274, 468], ['Krefeld', 1257, 498, 'mid'], ['Lintorf', 1497, 497], ['Nettetal', 998, 528], ['Ratingen', 1513, 561], ['Süchteln', 1086, 581], ['Limburg', 639, 613, 'prov'], ['Meerbusch', 1358, 617], ['Hamont-Achel', 321, 634], ['Weert', 494, 636], ['Viersen', 1104, 632], ['Brüggen', 917, 656], ['Lommel', 138, 676], ['Kaarst', 1308, 684], ['Düsseldorf', 1449, 686, 'city'], ['Pelt', 247, 696], ['Roermond', 745, 743, 'mid'], ['Mönchengladbach', 1144, 740, 'mid'], ['Bocholt', 379, 777], ['Rheydt', 1152, 789], ['Kinrooi', 525, 826], ['Bree', 397, 831], ['Wegberg', 1002, 832], ['Peer', 269, 848], ['Leopoldsburg', 98, 871], ['Wassenberg', 895, 904], ['Maaseik', 570, 913], ['Grevenbroich', 1276, 921], ['Dormagen', 1508, 915], ['Erkelenz', 1038, 937], ['Oudsbergen', 361, 960], ['Heinsberg', 843, 965], ['Houthalen-', 201, 978], ['Helchteren', 201, 1015], ['Beringen', 66, 993], ['Dilsen-Stokkem', 516, 1026], ['Hilden', 1590, 788]],
  2: [['Bottrop', 16, 169, 'mid'], ['Dortmund', 495, 181, 'city'], ['Unna', 696, 148], ['Bochum', 275, 238, 'mid'], ['Fröndenberg/', 763, 233], ['Ruhr', 763, 271], ['Rüthen', 1358, 221], ['Bad Wünnenberg', 1600, 176], ['Essen', 94, 278, 'city'], ['Neheim', 936, 288], ['Schwerte', 585, 301], ['Witten', 378, 315], ['Menden', 790, 315], ['Warstein', 1287, 300], ['Hattingen', 246, 380], ['Werden', 82, 401], ['Wetter (Ruhr)', 433, 404], ['Arnsberg', 1026, 381], ['Brilon', 1478, 387], ['Iserlohn', 704, 424], ['Hagen', 502, 455, 'mid'], ['Olsberg', 1409, 460], ['Velbert', 119, 484], ['Meschede', 1227, 480], ['Balve', 853, 497], ['Sundern', 978, 504], ['Gevelsberg', 383, 520], ['Neviges', 158, 539], ['Altena', 680, 557], ['Willingen', 1515, 546], ['(Upland)', 1517, 584], ['Wuppertal', 239, 620, 'city'], ['Mettmann', 60, 638], ['Breckerfeld', 497, 625], ['Werdohl', 761, 630], ['Eslohe (Sauerland)', 1125, 637], ['Lüdenscheid', 650, 699], ['Plettenberg', 860, 707], ['Radevormwald', 398, 726], ['Winterberg', 1450, 742], ['Solingen', 155, 781, 'mid'], ['Finnentrop', 947, 778], ['Schmallenberg', 1224, 813], ['Wermelskirchen', 272, 833], ['Lennestadt', 1022, 862], ['Wipperfürth', 426, 878], ['Hallenberg', 1515, 888], ['Leichlingen', 92, 894], ['Meinerzhagen', 651, 894], ['Kürten', 313, 984], ['Bad Berleburg', 1321, 997], ['Leverkusen', 70, 1020, 'mid'], ['Gummersbach', 582, 1028], ['Olpe', 831, 1026], ['Naturpark', 1161, 282, 'park'], ['Arnsberger', 1161, 324, 'park'], ['Wald', 1161, 366, 'park'], ['Naturpark', 1072, 904, 'bigpark'], ['Sauerland-', 1072, 957, 'bigpark'], ['Rothaargebirge', 1072, 1011, 'bigpark']]
};

/* Roughens a polyline by displacing the midpoints of its segments. */
function roughen(d, amount) {
  const closed = d.endsWith('Z');
  let pts = d.replace(/[MZ]/g, '').split('L').map(p => p.split(',').map(Number));
  if (closed) pts.push(pts[0]);
  for (let pass = 0; pass < 3; pass++) {
    const out = [pts[0]];
    for (let i = 1; i < pts.length; i++) {
      const [ax, ay] = pts[i - 1], [bx, by] = pts[i];
      const k = (rnd() - 0.5) * amount;
      if (Math.hypot(bx - ax, by - ay) > 12) out.push([(ax + bx) / 2 - (by - ay) * k, (ay + by) / 2 + (bx - ax) * k]);
      out.push(pts[i]);
    }
    pts = out;
  }
  return 'M' + pts.map(p => p.map(v => v.toFixed(1)).join(',')).join('L') + (closed ? 'Z' : '');
}

const wobble = { m: 0.22, r: 0.15, t: 0.3, w: 0.6, b: 0.5, bg: 0.3, bl: 0.15 };

function drawMap() {
  const map = document.getElementById('map');
  const tiles = [0, 1, 2].map(t => add(map, 'g', { transform: `translate(${t * 640} ${-TOP}) scale(${1 / UX} ${1 / UY})` }));
  areas.forEach(([t, cls, d]) => add(tiles[t], 'path', { class: cls, d: roughen(d, cls === 'urban' ? 0.7 : 0.35) }));
  const minor = add(map, 'g', {});
  for (let i = 0; i < 520; i++) {
    let x = rnd() * 1904, y = rnd() * 310, a = rnd() * 6.28;
    if (x < 240 && y < 120) continue;
    let d = `M${x.toFixed(1)},${y.toFixed(1)}`;
    const count = 8 + rnd() * 14;
    for (let k = 0; k < count; k++) {
      a += (rnd() - 0.5) * 1.2;
      x += Math.cos(a) * 5; y += Math.sin(a) * 5;
      d += `L${x.toFixed(1)},${y.toFixed(1)}`;
    }
    add(minor, 'path', { class: i % 3 === 0 ? 'y' : 'g', d });
  }
  const roads = [0, 1, 2].map(t => add(map, 'g', { transform: tiles[t].getAttribute('transform') }));
  lines.forEach(([t, cls, d]) => add(roads[t], 'path', { class: cls, d: roughen(d, wobble[cls]) }));
  for (const t in labels) labels[t].forEach(([name, x, y, cls]) => {
    const drop = cls === 'city' || cls === 'bigpark' ? 5 : 4;
    add(map, 'text', { class: cls || 'town', x: Math.round(t * 640 + x / UX), y: Math.round(y / UY - TOP + drop) }, name);
  });
  add(map, 'circle', { cx: 1003, cy: 94, r: 6, fill: '#f00', 'fill-opacity': 0.65, stroke: '#a33' });
  add(map, 'path', { d: 'M1022,242h12M1028,236v12M1033,242a5,5 0 1,1 -10,0a5,5 0 1,1 10,0', stroke: '#777' });
}

/* Charts */
const cirTrace = [
  [-738, [740,440,750,450,765,430,775,490,783,455,793,478,800,425,808,455,820,430,827,460,838,440,850,450,866,428,875,455,888,432,900,430,908,460,917,432,930,450,948,430,957,490,970,450,985,478,992,440,1005,455,1030,410,1038,445,1055,468,1065,440,1075,465,1088,415,1102,460,1115,435,1130,465,1157,400,1165,440,1175,410,1190,495,1202,440,1210,460,1225,405,1240,480,1257,400,1267,445,1280,330,1284,270,1292,270,1298,360,1305,400,1315,450,1325,432,1335,395,1345,400,1355,465,1370,420,1378,415,1386,352,1393,400,1405,445,1415,428,1440,430,1450,450,1465,400,1467,410]],
  [732, [0,415,20,445,38,458,52,415,60,478,68,440,95,420,110,478,130,450,138,410,148,430,160,435,180,462,190,437,200,458,215,445,243,435,250,498,258,460,270,450,310,415,328,470,345,435,357,478,367,415,378,455,390,450,396,465,407,415,427,460,440,440,468,418,475,455,490,440,503,455,512,430,533,430,548,470,568,428,585,465,600,445,615,465,625,425,640,445,662,425,668,450,680,430,700,425,710,445,722,428,745,465,760,435,770,458,780,425,787,470,795,425,805,440,827,440,831,512,838,435,850,445,865,415,880,445,905,435,915,445,923,418,930,470,942,440,957,415,975,475,985,440,1017,490,1027,430,1045,445,1058,455,1070,420,1088,455,1102,425,1115,460,1125,430,1133,465,1140,430,1150,470,1160,440,1180,420,1192,445,1205,435,1216,470,1227,435,1245,418,1260,445,1272,435,1287,470,1302,412,1312,460,1322,430,1345,450,1355,480,1365,450,1385,488,1400,430,1415,460,1428,445,1447,470,1458,430,1478,475,1485,445,1493,440]]
];
const audTrace = [
  [-828, [830,315,838,285,848,265,852,325,858,350,870,325,877,365,884,328,892,360,905,365,910,390,920,385,928,400,936,365,943,400,955,398,965,383,970,420,980,405,993,437,1000,430,1010,382,1020,415,1030,385,1040,415,1047,425,1055,408,1065,455,1070,428,1080,445,1090,415,1097,452,1105,428,1118,430,1130,390,1138,428,1155,452,1172,420,1180,460,1190,465,1200,450,1207,502,1220,490,1227,445,1248,438,1270,460,1280,430,1287,450,1295,388,1302,455,1310,435,1320,435,1333,467,1342,437,1358,440,1380,425,1388,405,1400,450,1410,430,1416,382,1425,430,1440,430,1452,408,1460,440,1468,420]],
  [642, [0,418,15,470,25,415,32,455,45,428,60,470,68,460,75,420,85,455,90,515,97,495,108,490,118,450,125,470,132,412,140,440,150,510,157,460,163,480,175,433,183,465,200,455,215,458,230,492,237,465,262,447,270,460,288,442,298,450,303,475,310,465,318,517,325,495,338,462,348,485,355,465,373,460,385,515,405,460,413,490,425,478,437,478,448,512,455,475,462,528,470,452,475,495,488,480,500,470,508,505,540,487,555,505,565,480,582,512,590,467,600,500,612,485,620,508,627,472,637,508,648,502,660,545,668,485,678,520,687,487,710,528,718,485,728,515,735,580,740,585,755,540,765,555,775,508,787,512,788,595,795,660,800,617,810,640,818,617,825,648,838,610,848,643,858,625,865,668]]
];

function unpack(parts, top, w, h) {
  const out = [];
  parts.forEach(([dx, v]) => { for (let i = 0; i < v.length; i += 2) out.push([(v[i] + dx) / w, (v[i + 1] - top) / h]); });
  return out;
}

function rfPoints() {
  const out = [];
  for (let i = 0; i <= 600; i++) {
    const f = i / 600;
    let y = 21 + rnd() * 2;
    if (f < 0.03) y = 26 + rnd() * 2; else if (f < 0.045) y = 21 + rnd() * 4; else if (f < 0.12) y = 22 + rnd() * 3;
    if (f > 0.87) y = 22 + rnd() * 3;
    if (f > 0.94) y = 25 + rnd() * 2;
    out.push([f, y / 40]);
  }
  return out;
}

function chart(id, o) {
  const svg = document.getElementById(id);
  svg.replaceChildren();
  const W = svg.clientWidth, H = svg.clientHeight;
  const x0 = o.left, x1 = W - 5, y0 = 10, y1 = H - o.bottom, w = x1 - x0, h = y1 - y0;
  const X = f => x0 + f * w, Y = f => y0 + f * h;
  const d = o.points.map(([a, b], i) => `${i ? 'L' : 'M'}${X(a).toFixed(1)},${Y(b).toFixed(1)}`).join('');
  const last = o.points[o.points.length - 1][0];
  const clip = add(add(svg, 'defs', {}), 'clipPath', { id: id + 'clip' });
  add(clip, 'path', { d: `${d}L${X(last)},${y1 - 1}L${x0},${y1 - 1}Z` });
  add(svg, 'rect', { x: x0, y: y0, width: w, height: h, fill: `url(#${o.fill})`, 'clip-path': `url(#${id}clip)` });
  add(svg, 'path', { class: 'trace', d });
  let g = '';
  o.rows.forEach(f => { const y = Math.round(Y(f)) + 0.5; g += `M${x0},${y}H${x1 + 1}`; });
  o.cols.forEach(([f]) => { const x = Math.round(X(f)) + 0.5; g += `M${x},${y0}V${y1 + o.tick}`; });
  add(svg, 'path', { class: 'grid', d: g + `M${x0 + 0.5},${y0 + 0.5}H${x1 + 0.5}V${y1 + 0.5}H${x0 + 0.5}Z` });
  if (o.guard) add(svg, 'rect', { x: X(o.guard[0]), y: y0, width: (o.guard[1] - o.guard[0]) * w, height: h, fill: '#fff', 'fill-opacity': 0.24 });
  o.cols.forEach(([f, t]) => { if (t) add(svg, 'text', { x: X(f), y: y1 + 16, 'text-anchor': 'middle' }, t); });
  o.ylabels.forEach(([f, t]) => add(svg, 'text', { x: x0 - 7, y: Y(f) + 4, 'text-anchor': 'end' }, t));
  (o.dots || []).forEach(([a, b, c]) => add(svg, 'circle', { cx: X(a), cy: Y(b), r: 3.5, fill: c }));
  (o.notes || []).forEach(([x, y, t]) => add(svg, 'text', { class: 'note', x, y }, t));
  if (o.marker) add(svg, 'path', { d: `M${Math.round(X(o.marker)) + 0.5},${y0}V${y1}`, stroke: '#7fff00' });
  if (o.xtitle) add(svg, 'text', { x: x0 + w / 2, y: y1 + 36, 'text-anchor': 'middle' }, o.xtitle);
  add(svg, 'text', { transform: `translate(${o.tx} ${o.ty || y0 + h / 2}) rotate(-90)`, 'text-anchor': 'middle' }, o.ytitle);
}

const steps = (n, to = 1) => Array.from({ length: n + 1 }, (_, i) => i * to / n);
const cirPts = unpack(cirTrace, 177, 2229, 486);
const audPts = unpack(audTrace, 183, 2139, 488);
const rfPts = rfPoints();

function drawCharts() {
  chart('rfchart', {
    left: 72, bottom: 0, tick: 0, fill: 'blueFill', points: rfPts, rows: steps(10),
    cols: [0.0746, 0.1722, 0.2699, 0.3675, 0.4652, 0.5628, 0.6605, 0.7581, 0.8558, 0.9534].map(f => [f]),
    ylabels: [[0, '-55.0'], [0.5, '-105.0'], [1, '-155.0']], marker: 0.5,
    notes: [[124, 29, 'fRes = 500,0 Hz / bin'], [124, 49, 'x-Scale: 200,000 kHz / div']], ytitle: 'dBm', tx: 17, ty: 31
  });
  chart('circhart', {
    left: 76, bottom: 50, tick: 6, fill: 'greenFill', points: cirPts, rows: steps(10),
    cols: [-400, -200, 0, 200, 400, 600, 800, 1000, 1200, 1400].map(v => [0.2459 + v * 0.0004885, String(v)]),
    ylabels: [50, 40, 30, 20, 10, 0].map(v => [1 - v / 50, v.toFixed(1)]), guard: [0.081, 0.244],
    dots: [[0.246, 0.18, '#ff0'], [0.27, 0.44, '#00f'], [0.29, 0.395, '#f00'], [0.327, 0.457, '#ee82ee']],
    xtitle: 'Samples', ytitle: 'Magnitude (dB)', tx: 22
  });
  chart('audchart', {
    left: 76, bottom: 50, tick: 6, fill: 'greenFill', points: audPts, rows: steps(13, 0.975),
    cols: Array.from({ length: 11 }, (_, i) => [0.0893 * (i + 1), (2 * (i + 1)).toFixed(1)]),
    ylabels: [5, 15, 25, 35, 45, 55, 65].map(v => [(v - 5) * 0.015, '-' + v.toFixed(1)]),
    xtitle: 'Frequency (kHz)', ytitle: 'Magnitude (dB)', tx: 22
  });
}

drawMap();
drawCharts();
window.addEventListener('resize', drawCharts);
```
